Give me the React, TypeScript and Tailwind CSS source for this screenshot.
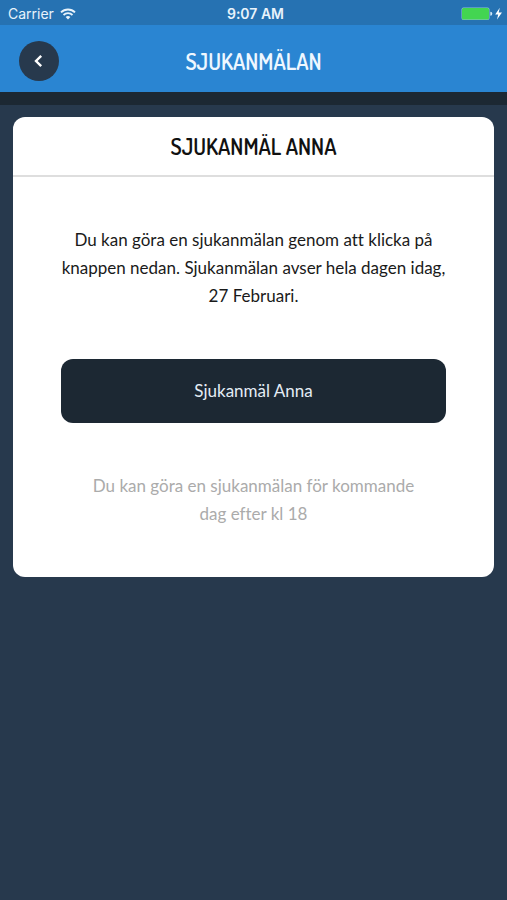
import { ReactNode } from 'react';

interface CardProps {
  title: string;
  children: ReactNode;
}

const WifiIcon = () => (
  <svg viewBox="0 0 16 12" className="w-4 h-3" fill="none" stroke="currentColor" aria-hidden="true">
    <path d="M1 4.4a10 10 0 0 1 14 0" strokeWidth="1.9" />
    <path d="M3.5 7a6.4 6.4 0 0 1 9 0" strokeWidth="1.8" />
    <path d="M8 11.6 5.6 9.1a3.4 3.4 0 0 1 4.8 0z" fill="currentColor" stroke="none" />
  </svg>
);

const BatteryIcon = () => (
  <svg viewBox="0 0 42 14" className="w-[42px] h-3.5" aria-hidden="true">
    <rect x="0.5" y="0.5" width="28" height="12.5" rx="2" fill="#8fc0d8" />
    <rect x="1" y="1" width="27" height="11.5" rx="1.5" fill="#43d551" />
    <path d="M29.3 4.8a2 2 0 0 1 0 4z" fill="#d5e8f6" />
    <path d="M38.8 0.8 34.2 7.4h3L36 12.4 41 5.6h-3.3z" fill="#fff" />
  </svg>
);

const StatusBar = () => (
  <div className="grid grid-cols-3 items-center h-[25px] pt-0.5 pl-2 pr-1 bg-[#2672b2] text-[#e8f3fb] font-['Inter','Liberation_Sans',sans-serif] text-sm">
    <div className="flex items-center gap-1.5">
      <span>Carrier</span>
      <WifiIcon />
    </div>
    <time className="text-center font-semibold">9:07 AM</time>
    <div className="flex justify-end">
      <BatteryIcon />
    </div>
  </div>
);

const Header = ({ title }: { title: string }) => (
  <header className="grid grid-cols-[40px_1fr_40px] items-center h-[67px] px-[19px] pt-1 bg-[#2a85d2]">
    <button
      type="button"
      aria-label="Tillbaka"
      className="flex items-center justify-center size-10 rounded-full bg-[#27394d] text-white"
    >
      <svg viewBox="0 0 10 14" className="w-2.5 h-3.5" fill="none" stroke="currentColor" strokeWidth="2.4" aria-hidden="true">
        <path d="M7.2 1.8 2 7l5.2 5.2" />
      </svg>
    </button>
    <h1 className="text-center text-[22px] leading-7 font-semibold text-[#eef7ff] font-['Dosis','Lato',sans-serif]">
      {title}
    </h1>
  </header>
);

const Card = ({ title, children }: CardProps) => (
  <section className="rounded-xl bg-white overflow-hidden">
    <h2 className="flex items-center justify-center h-[60px] border-b-2 border-[#dedede] text-[22px] leading-7 font-semibold text-[#111] font-['Dosis','Lato',sans-serif]">
      {title}
    </h2>
    {children}
  </section>
);

const App = () => {
  return (
    <div className="min-h-screen bg-[#27394d] font-['Lato',sans-serif] [font-variant-ligatures:none]">
      <StatusBar />
      <Header title="SJUKANMÄLAN" />
      <div className="h-[13px] bg-[#1c2833]" />

      <main className="px-[13px] py-3">
        <Card title="SJUKANMÄL ANNA">
          <div className="px-12 py-[49px] text-center text-[17px] leading-7">
            <p className="text-[#1a1a1a]">
              Du kan göra en sjukanmälan genom att klicka på knappen nedan. Sjukanmälan avser hela dagen idag, 27 Februari.
            </p>
            <button type="button" className="w-full h-16 my-[49px] rounded-xl bg-[#1c2833] text-[#e4edf5]">
              Sjukanmäl Anna
            </button>
            <p className="px-6 text-[#ababab]">
              Du kan göra en sjukanmälan för kommande dag efter kl 18
            </p>
          </div>
        </Card>
      </main>
    </div>
  );
};

export default App;
